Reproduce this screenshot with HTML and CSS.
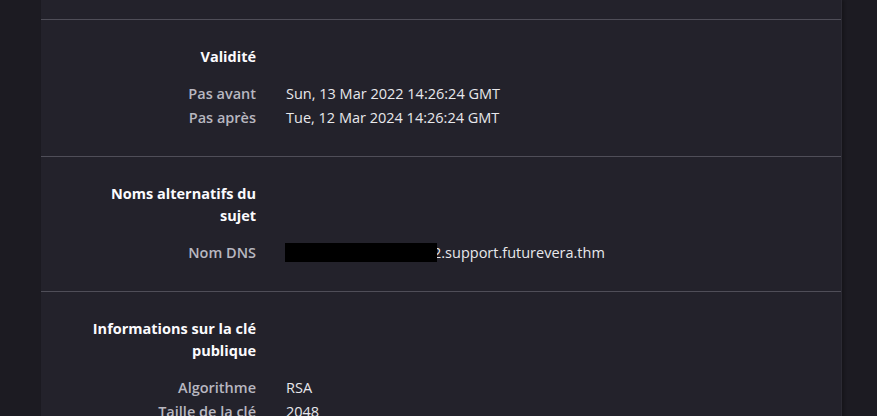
FILE: index.html
```html
<!DOCTYPE html>
<html lang="fr">
<head>
<meta charset="utf-8">
<title>Certificat</title>
<link rel="stylesheet" href="styles.css">
</head>
<body>
<div class="page">
  <div class="card">
    <div class="section-tail"></div>

    <section class="info-group">
      <div class="info-item">
        <span class="group-title">Validité</span>
        <span></span>
      </div>
      <div class="rows">
        <div class="info-item">
          <span class="label">Pas avant</span>
          <span class="value">Sun, 13 Mar 2022 14:26:24 GMT</span>
        </div>
        <div class="info-item">
          <span class="label">Pas après</span>
          <span class="value">Tue, 12 Mar 2024 14:26:24 GMT</span>
        </div>
      </div>
    </section>

    <section class="info-group">
      <div class="info-item">
        <span class="group-title">Noms alternatifs du sujet</span>
        <span></span>
      </div>
      <div class="rows">
        <div class="info-item">
          <span class="label">Nom DNS</span>
          <span class="value redacted-value"><span class="dns">2.support.futurevera.thm</span><span class="redaction"></span></span>
        </div>
      </div>
    </section>

    <section class="info-group">
      <div class="info-item">
        <span class="group-title">Informations sur la clé publique</span>
        <span></span>
      </div>
      <div class="rows">
        <div class="info-item">
          <span class="label">Algorithme</span>
          <span class="value">RSA</span>
        </div>
        <div class="info-item">
          <span class="label">Taille de la clé</span>
          <span class="value">2048</span>
        </div>
      </div>
    </section>
  </div>
</div>
</body>
</html>
```

FILE: styles.css
```css
html, body {
  margin: 0;
  padding: 0;
  background: #1c1b22;
  height: 100%;
  overflow: hidden;
}

body {
  font-family: "Open Sans", "Noto Sans", sans-serif;
  font-size: 14.5px;
  color: #fbfbfe;
}

.page {
  padding-left: 41px;
}

.card {
  width: 800px;
  background: #23222b;
  border-right: 1px solid #2b2a33;
  box-shadow: 2px 0 3px rgba(0, 0, 0, 0.25);
  min-height: 460px;
}

.section-tail {
  height: 19px;
  border-bottom: 1px solid #4f4e58;
}

.info-group {
  padding: 26px 0 26px 43px;
  border-bottom: 1px solid #4f4e58;
  display: flex;
  flex-direction: column;
  gap: 14px;
}

.info-item {
  display: grid;
  grid-template-columns: 172px auto;
  column-gap: 30px;
  line-height: 24px;
}

.group-title {
  font-weight: 700;
  text-align: right;
  line-height: 22px;
  color: #fbfbfe;
}

.label {
  text-align: right;
  font-weight: 600;
  color: #b8b7c0;
}

.value {
  color: #e8e8ec;
}

.redacted-value {
  position: relative;
}

.dns {
  padding-left: 147px;
}

.redaction {
  position: absolute;
  left: -1px;
  top: 2px;
  width: 152px;
  height: 19px;
  background: #000;
}
```
